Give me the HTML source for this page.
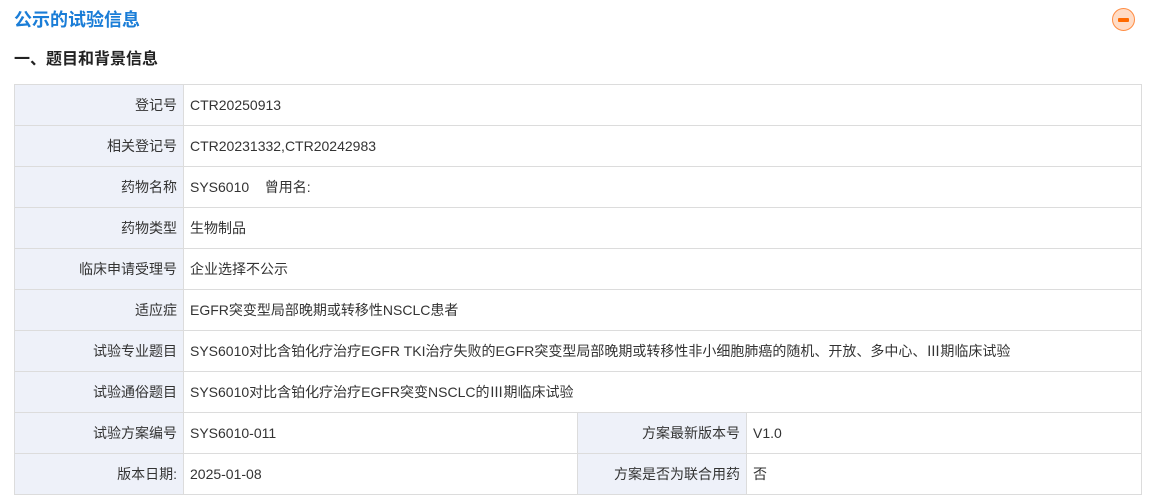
<!DOCTYPE html><html><head><meta charset="utf-8"><style>
body{margin:0;background:#fff;font-family:"Liberation Sans","Noto Sans CJK SC",sans-serif;width:1151px;height:499px;overflow:hidden;position:relative}
.t{position:absolute;left:14px;top:8px;font-size:18px;font-weight:bold;color:#1a7dd7;line-height:24px}
.s{position:absolute;left:14px;top:49px;font-size:16px;font-weight:bold;color:#222;line-height:22px}
.ic{position:absolute;left:1112px;top:8px;width:23px;height:23px;border-radius:50%;background:#ffdcc6;border:1px solid #ff8c42;box-sizing:border-box}
.ic:after{content:"";position:absolute;left:5px;top:9px;width:11px;height:4px;background:#ff6a00;border-radius:1px}
table{position:absolute;left:14px;top:84px;border-collapse:collapse;width:1128px;table-layout:fixed;font-size:14px;color:#333}
td{border:1px solid #dcdcdc;height:41px;padding:0 6px;box-sizing:border-box}
td.l{background:#eef1f9;text-align:right}
</style></head><body>
<div class="t">公示的试验信息</div>
<div class="ic"></div>
<div class="s">一、题目和背景信息</div>
<table>
<colgroup><col style="width:169px"><col style="width:394px"><col style="width:169px"><col></colgroup>
<tr><td class="l">登记号</td><td colspan="3">CTR20250913</td></tr>
<tr><td class="l">相关登记号</td><td colspan="3">CTR20231332,CTR20242983</td></tr>
<tr><td class="l">药物名称</td><td colspan="3">SYS6010&nbsp;&nbsp;&nbsp; 曾用名:</td></tr>
<tr><td class="l">药物类型</td><td colspan="3">生物制品</td></tr>
<tr><td class="l">临床申请受理号</td><td colspan="3">企业选择不公示</td></tr>
<tr><td class="l">适应症</td><td colspan="3">EGFR突变型局部晚期或转移性NSCLC患者</td></tr>
<tr><td class="l">试验专业题目</td><td colspan="3">SYS6010对比含铂化疗治疗EGFR TKI治疗失败的EGFR突变型局部晚期或转移性非小细胞肺癌的随机、开放、多中心、Ⅲ期临床试验</td></tr>
<tr><td class="l">试验通俗题目</td><td colspan="3">SYS6010对比含铂化疗治疗EGFR突变NSCLC的Ⅲ期临床试验</td></tr>
<tr><td class="l">试验方案编号</td><td>SYS6010-011</td><td class="l">方案最新版本号</td><td>V1.0</td></tr>
<tr><td class="l">版本日期:</td><td>2025-01-08</td><td class="l">方案是否为联合用药</td><td>否</td></tr>
</table>
</body></html>
